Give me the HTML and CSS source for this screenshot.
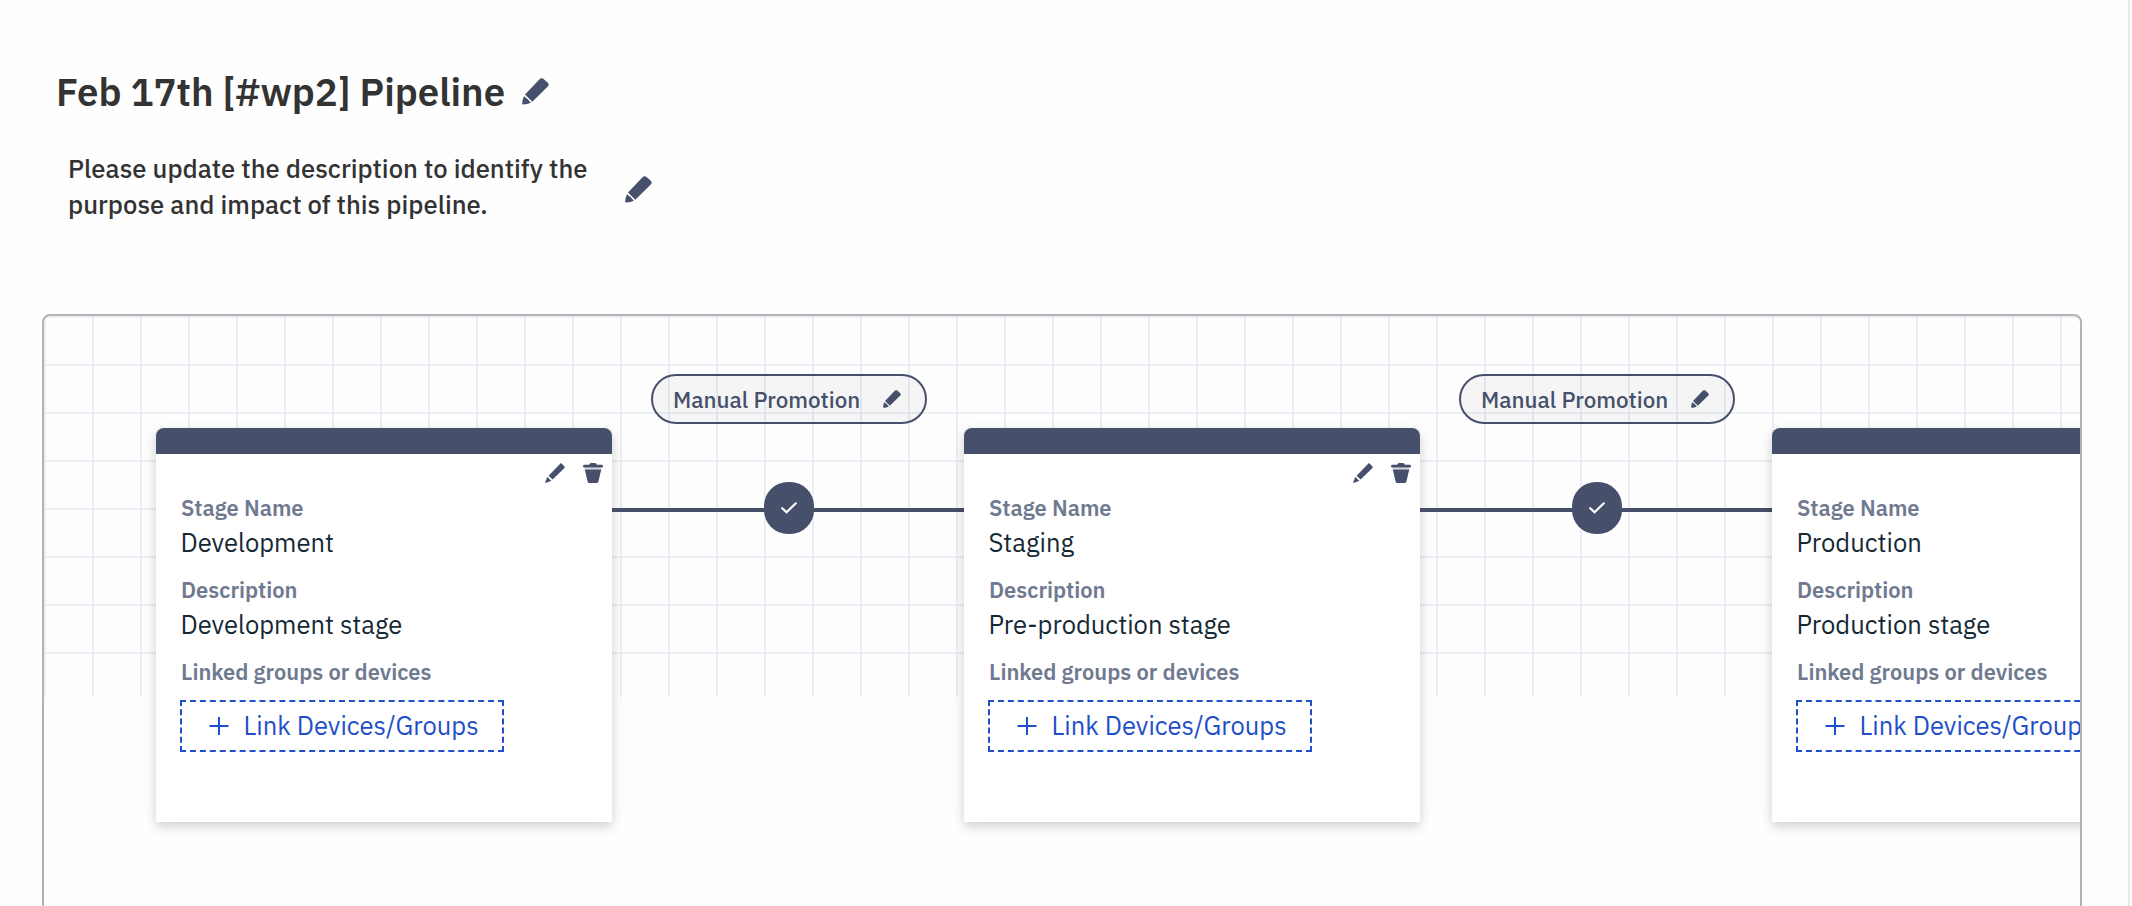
FILE: index.html
```html
<!DOCTYPE html>
<html lang="en">
<head>
<meta charset="utf-8">
<title>Feb 17th [#wp2] Pipeline</title>
<link rel="stylesheet" href="styles.css">
</head>
<body>
<svg class="sprite" aria-hidden="true">
  <symbol id="pencil" viewBox="0 0 27 27"><path d="M3 16.600 17.300 1.500Q19.200-.5 21.300 .8L25.500 4.600Q27.600 6.300 26 8.300L10.300 23.700Z"/><path d="M2 18.300Q5.500 20.500 8.800 24.700Q6 26.400 1 26.600Q.1 26.500.2 25.500.4 21.500 2 18.300Z"/></symbol>
  <symbol id="pencil-small" viewBox="0 0 20 20"><path d="M3.600 12.800 15.400 .6Q16 0 16.600.6L19.500 3.600Q20 4.200 19.500 4.900L7.600 16.600Z"/><path d="M2.300 13.800 6.300 17.900 0 20Z"/></symbol>
  <symbol id="trash" viewBox="0 0 20 20"><path d="M1.500 1.800H6Q6.800 0 8 0H12Q13.200 0 14 1.800H18.500Q20 1.800 20 3.200T18.500 4.600H1.500Q0 4.600 0 3.200T1.500 1.800Z"/><path opacity=".25" d="M1.500 4.600H18.500L18.300 6.500H1.700Z"/><path d="M1.700 6.500H18.300L15.400 18.500Q15 20 13.800 20H6.200Q5 20 4.600 18.500Z"/></symbol>
  <symbol id="plus" viewBox="0 0 20 20"><path d="M9 1H11V9H19.500V11H11V19H9V11H.5V9H9Z"/></symbol>
  <symbol id="check" viewBox="0 0 16 12"><path d="M1.200 6.200 5.500 10.300 14.800 1.300" fill="none" stroke="currentColor" stroke-width="2.200" stroke-linecap="round"/></symbol>
</svg>
<main class="page">
  <header class="heading">
    <h1 class="title">Feb 17th [#wp2] Pipeline</h1>
    <svg class="icon icon-large"><use href="#pencil"/></svg>
  </header>
  <section class="summary">
    <p class="summary-text">Please update the description to identify the<br>purpose and impact of this pipeline.</p>
    <svg class="icon icon-large"><use href="#pencil"/></svg>
  </section>
  <section class="canvas">
    <div class="pipeline">
      <article class="stage">
        <div class="stage-actions"><svg class="icon icon-small"><use href="#pencil-small"/></svg><svg class="icon icon-small"><use href="#trash"/></svg></div>
        <dl class="fields">
          <dt class="label">Stage Name</dt><dd class="value">Development</dd>
          <dt class="label">Description</dt><dd class="value">Development stage</dd>
          <dt class="label">Linked groups or devices</dt>
        </dl>
        <button class="link-button"><svg class="icon icon-plus"><use href="#plus"/></svg>Link Devices/Groups</button>
      </article>
      <div class="connector">
        <div class="promotion"><span class="promotion-text">Manual Promotion</span><svg class="icon icon-tiny"><use href="#pencil"/></svg></div>
        <div class="track"><span class="node"><svg class="icon icon-check"><use href="#check"/></svg></span></div>
      </div>
      <article class="stage">
        <div class="stage-actions"><svg class="icon icon-small"><use href="#pencil-small"/></svg><svg class="icon icon-small"><use href="#trash"/></svg></div>
        <dl class="fields">
          <dt class="label">Stage Name</dt><dd class="value">Staging</dd>
          <dt class="label">Description</dt><dd class="value">Pre-production stage</dd>
          <dt class="label">Linked groups or devices</dt>
        </dl>
        <button class="link-button"><svg class="icon icon-plus"><use href="#plus"/></svg>Link Devices/Groups</button>
      </article>
      <div class="connector">
        <div class="promotion"><span class="promotion-text">Manual Promotion</span><svg class="icon icon-tiny"><use href="#pencil"/></svg></div>
        <div class="track"><span class="node"><svg class="icon icon-check"><use href="#check"/></svg></span></div>
      </div>
      <article class="stage">
        <div class="stage-actions"><svg class="icon icon-small"><use href="#pencil-small"/></svg><svg class="icon icon-small"><use href="#trash"/></svg></div>
        <dl class="fields">
          <dt class="label">Stage Name</dt><dd class="value">Production</dd>
          <dt class="label">Description</dt><dd class="value">Production stage</dd>
          <dt class="label">Linked groups or devices</dt>
        </dl>
        <button class="link-button"><svg class="icon icon-plus"><use href="#plus"/></svg>Link Devices/Groups</button>
      </article>
    </div>
  </section>
</main>
</body>
</html>
```
FILE: styles.css
```css
* { box-sizing: border-box; }
body { margin: 0; background: #fefefe; font-family: "IBM Plex Sans", Roboto, sans-serif; color: #333; }
.sprite { display: none; }
.page { width: 2130px; height: 906px; padding: 64px 46px 0 42px; border-right: 2px solid #e8e8e8; overflow: hidden; }
.icon { display: block; flex: none; fill: currentColor; color: #46506b; }
.icon-large { width: 27px; height: 27px; }
.icon-small { width: 20px; height: 20px; }
.icon-tiny { width: 18px; height: 18px; }
.heading { display: flex; align-items: center; height: 56px; padding-left: 14px; }
.heading .icon { margin: -2px 0 0 19px; }
.title { width: 447px; margin: 0; font-size: 38.400px; line-height: 56px; font-weight: 600; white-space: nowrap; }
.summary { display: flex; align-items: center; height: 72px; margin: 31px 0 91px; padding-left: 26px; }
.summary .icon { margin-top: 4px; }
.summary-text { width: 557px; margin: 0; font-size: 25.640px; line-height: 36px; font-weight: 500; white-space: nowrap; }
.canvas { height: 640px; border: 2px solid #b3b3b3; border-radius: 8px; overflow: hidden;
  background-image: linear-gradient(#e9eff5 2px, transparent 2px), linear-gradient(90deg, #e9eff5 2px, transparent 2px);
  background-size: 48px 48px; background-color: #fefefe; position: relative; }
/* the grid ends part-way down the canvas */
.canvas::before { content: ""; position: absolute; inset: 381px 0 0; background: #fefefe; }
.pipeline { position: relative; display: flex; align-items: flex-start; width: 2200px; padding: 58px 0 0 112px; }
.stage { flex: none; width: 456px; height: 394px; margin-top: 54px; padding: 9px 9px 0 24px; border-top: 26px solid #46506b; border-radius: 8px 8px 0 0; background: #fff; box-shadow: 0 4px 12px rgba(0,0,0,.2); }
.stage-actions { display: flex; justify-content: flex-end; gap: 18px; height: 20px; }
.fields { margin: 9px 0 0; white-space: nowrap; }
.label { height: 32px; padding-left: 1px; font-size: 21.900px; line-height: 32px; font-weight: 600; color: #6f7a90; }
.value { height: 40px; margin: 0 0 10px; padding-left: .5px; font-size: 25.600px; line-height: 37px; color: #152935; }
.link-button { display: flex; align-items: center; width: 324px; height: 52px; margin: 12px 0 0; padding: 0 0 1px 27px; gap: 14.500px; border: 2px dashed #1f4fc9; background: none; color: #1f4fc9; font: 25.600px/46px "IBM Plex Sans", Roboto, sans-serif; white-space: nowrap; }
.link-button .icon { color: inherit; margin-top: 1px; }
.icon-plus { width: 20px; height: 20px; }
.connector { flex: none; display: flex; flex-direction: column; align-items: center; width: 352px; }
.promotion { display: flex; align-items: center; justify-content: space-between; width: 276px; height: 50px; margin-left: 2px; padding: 0 24px 0 20px; border: 2px solid #46506b; border-radius: 25px; background: rgba(70,70,90,.05); }
.promotion-text { font-size: 22.400px; font-weight: 500; color: #46506b; white-space: nowrap; }
.track { display: flex; justify-content: center; align-items: center; width: 100%; height: 52px; margin-top: 58px; background: linear-gradient(#46506b, #46506b) 0 26px / 100% 4px no-repeat; }
.node { display: flex; align-items: center; justify-content: center; width: 50px; height: 52px; margin-left: 2px; border-radius: 24px; background: #46506b; }
.icon-check { width: 16px; height: 12px; color: #fff; }
```
